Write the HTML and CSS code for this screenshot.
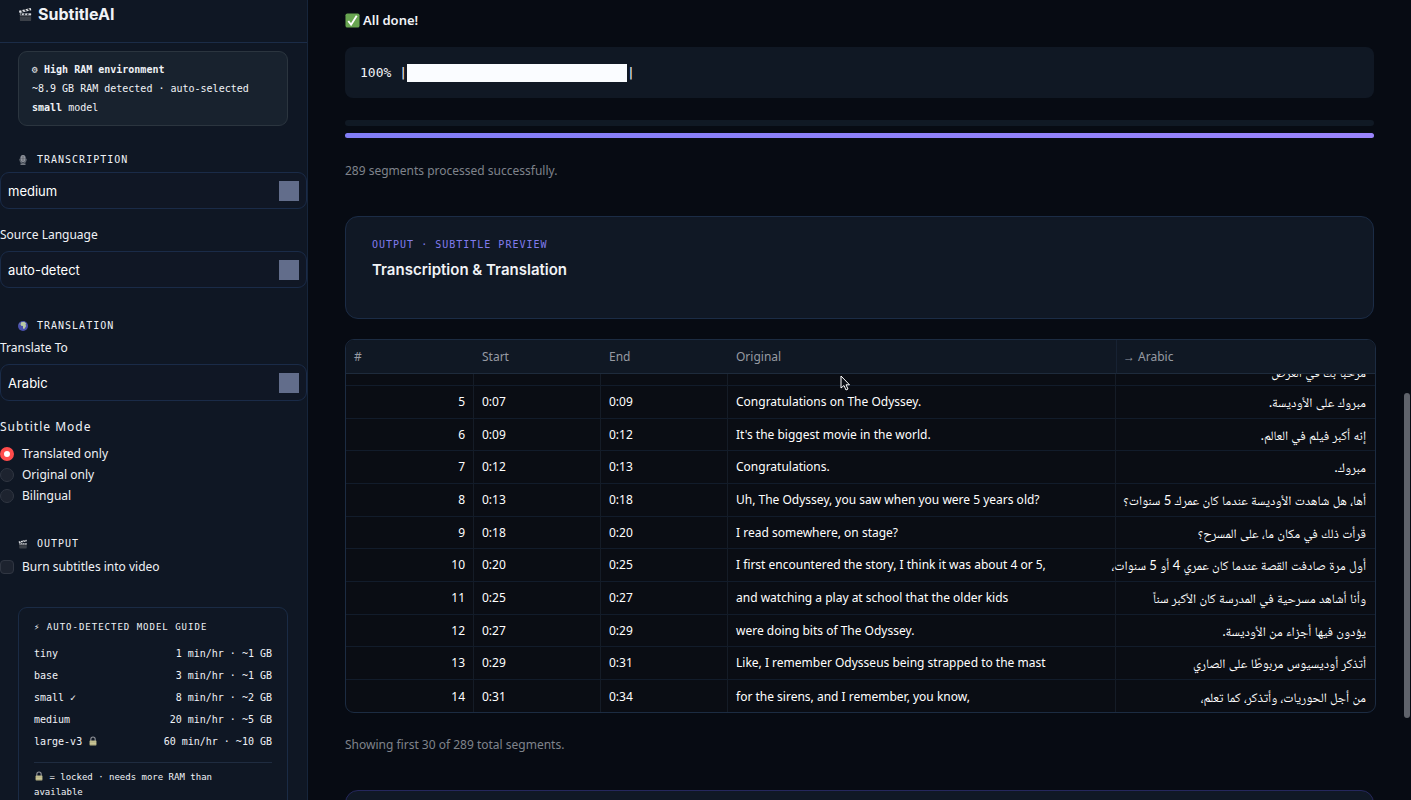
FILE: index.html
```html
<!DOCTYPE html>
<html lang="en">
<head>
  <meta charset="UTF-8" />
  <meta name="viewport" content="width=device-width, initial-scale=1.0"/>
  <title>SubtitleAI</title>
  <link rel="stylesheet" href="styles.css">
</head>
<body>

  <!-- shared icons -->
  <svg class="defs" width="0" height="0" aria-hidden="true">
    <symbol id="clapper" viewBox="0 0 16 16">
      <rect x="2" y="7" width="12" height="8" rx="1" fill="#3b4048"/>
      <path d="M2 10h12" stroke="#2a2e35"/>
      <path d="M1 4L13.500 1l.7 2.500L1.700 6.500z" fill="#e4e6ea"/>
      <path d="M3.500 3.400l2 2.200M7 2.500l2 2.200M10.500 1.700l2 2.200" stroke="#30343b" stroke-width="1.500"/>
      <path d="M2 6.800h12v2H2z" fill="#d5d8dd"/>
      <path d="M4 6.800l-1 2M7.500 6.800l-1 2M11 6.800l-1 2" stroke="#30343b" stroke-width="1.400"/>
    </symbol>
    <symbol id="mic" viewBox="0 0 16 16">
      <rect x="4" y="0" width="8" height="11" rx="4" fill="#a4a8b0"/>
      <path d="M5 3h6M5 5.500h6M5 8h6M8 .5v10" stroke="#555962"/>
      <path d="M3 6v2a5 5 0 0 0 10 0V6M8 12.500V14" fill="none" stroke="#7d828b" stroke-width="1.300"/>
      <path d="M4 13.500h8V16H4z" fill="#747982"/>
    </symbol>
    <symbol id="globe" viewBox="0 0 16 16">
      <circle cx="8" cy="8" r="8" fill="#4a50ad"/>
      <path d="M5 2l5-.7 3 2.500-1 2 1 2-3 5-2-1V8L5 7.500 4 5z" fill="#b9c9a5"/>
      <path d="M2 5l1-1.500L4 6z" fill="#8fae8b"/>
    </symbol>
    <symbol id="lock" viewBox="0 0 16 16">
      <path d="M4.500 8V5a3.500 3.500 0 0 1 7 0v3" fill="none" stroke="#8d9096" stroke-width="1.800"/>
      <rect x="2.500" y="7" width="11" height="8" rx="1" fill="#b5b184"/>
      <path d="M3 9.500h10M3 12h10" stroke="#d5d0a2"/>
    </symbol>
    <symbol id="check" viewBox="0 0 16 16">
      <rect x=".5" y=".5" width="15" height="15" rx="2" fill="#68a551"/>
      <path d="M3.500 8.500l3 4 6-9.500" fill="none" stroke="#fff" stroke-width="2"/>
    </symbol>
  </svg>

  <div class="app">
    <aside class="sidebar">
      <header class="brand">
        <svg class="icon-lg"><use href="#clapper"/></svg>
        <h1>SubtitleAI</h1>
      </header>

      <div class="ram-card">
        <b>⚙ High RAM environment</b><br>
        ~8.9 GB RAM detected · auto-selected<br>
        <b>small</b> model
      </div>

      <h2 class="section-label"><svg class="icon"><use href="#mic"/></svg>TRANSCRIPTION</h2>
      <div class="field">
        <select aria-label="Whisper model">
          <option>medium</option>
        </select>
      </div>
      <div class="field">
        <label for="source">Source Language</label>
        <select id="source">
          <option>auto-detect</option>
        </select>
      </div>

      <h2 class="section-label"><svg class="icon"><use href="#globe"/></svg>TRANSLATION</h2>
      <div class="field">
        <label for="target">Translate To</label>
        <select id="target">
          <option>Arabic</option>
        </select>
      </div>
      <fieldset class="field">
        <legend>Subtitle Mode</legend>
        <label class="choice"><input type="radio" name="mode" checked>Translated only</label>
        <label class="choice"><input type="radio" name="mode">Original only</label>
        <label class="choice"><input type="radio" name="mode">Bilingual</label>
      </fieldset>

      <h2 class="section-label"><svg class="icon"><use href="#clapper"/></svg>OUTPUT</h2>
      <div class="field">
        <label class="choice"><input type="checkbox">Burn subtitles into video</label>
      </div>

      <div class="guide">
        <h3>⚡ AUTO-DETECTED MODEL GUIDE</h3>
        <div class="guide-row"><span>tiny</span><span>1 min/hr · ~1 GB</span></div>
        <div class="guide-row"><span>base</span><span>3 min/hr · ~1 GB</span></div>
        <div class="guide-row"><span>small ✓</span><span>8 min/hr · ~2 GB</span></div>
        <div class="guide-row"><span>medium</span><span>20 min/hr · ~5 GB</span></div>
        <div class="guide-row"><span>large-v3 <svg class="icon"><use href="#lock"/></svg></span><span>60 min/hr · ~10 GB</span></div>
        <p class="guide-note"><svg class="icon"><use href="#lock"/></svg> = locked · needs more RAM than available</p>
      </div>
    </aside>

    <main class="content">
      <p class="status"><svg class="icon-lg"><use href="#check"/></svg>All done!</p>
      <div class="log">100% |<span class="log-bar"></span>|</div>
      <div class="track"></div>
      <progress value="100" max="100" aria-label="Progress"></progress>
      <p class="caption">289 segments processed successfully.</p>

      <section class="card">
        <div class="card-label">OUTPUT · SUBTITLE PREVIEW</div>
        <h2>Transcription &amp; Translation</h2>
      </section>

      <div class="table-wrap">
        <table>
          <colgroup>
            <col class="col-num"><col class="col-time"><col class="col-time"><col class="col-text"><col>
          </colgroup>
          <thead>
            <tr><th>#</th><th>Start</th><th>End</th><th>Original</th><th>→ Arabic</th></tr>
          </thead>
          <tbody>
            <tr class="peek"><td></td><td></td><td></td><td></td><td dir="rtl" lang="ar"><div>مرحبًا بك في العرض</div></td></tr>
            <tr><td>5</td><td>0:07</td><td>0:09</td><td>Congratulations on The Odyssey.</td><td dir="rtl" lang="ar">مبروك على الأوديسة.</td></tr>
            <tr><td>6</td><td>0:09</td><td>0:12</td><td>It's the biggest movie in the world.</td><td dir="rtl" lang="ar">إنه أكبر فيلم في العالم.</td></tr>
            <tr><td>7</td><td>0:12</td><td>0:13</td><td>Congratulations.</td><td dir="rtl" lang="ar">مبروك.</td></tr>
            <tr><td>8</td><td>0:13</td><td>0:18</td><td>Uh, The Odyssey, you saw when you were 5 years old?</td><td dir="rtl" lang="ar">أها، هل شاهدت الأوديسة عندما كان عمرك 5 سنوات؟</td></tr>
            <tr><td>9</td><td>0:18</td><td>0:20</td><td>I read somewhere, on stage?</td><td dir="rtl" lang="ar">قرأت ذلك في مكان ما، على المسرح؟</td></tr>
            <tr><td>10</td><td>0:20</td><td>0:25</td><td>I first encountered the story, I think it was about 4 or 5,</td><td dir="rtl" lang="ar">أول مرة صادفت القصة عندما كان عمري 4 أو 5 سنوات،</td></tr>
            <tr><td>11</td><td>0:25</td><td>0:27</td><td>and watching a play at school that the older kids</td><td dir="rtl" lang="ar">وأنا أشاهد مسرحية في المدرسة كان الأكبر سناً</td></tr>
            <tr><td>12</td><td>0:27</td><td>0:29</td><td>were doing bits of The Odyssey.</td><td dir="rtl" lang="ar">يؤدون فيها أجزاء من الأوديسة.</td></tr>
            <tr><td>13</td><td>0:29</td><td>0:31</td><td>Like, I remember Odysseus being strapped to the mast</td><td dir="rtl" lang="ar">أتذكر أوديسيوس مربوطًا على الصاري</td></tr>
            <tr><td>14</td><td>0:31</td><td>0:34</td><td>for the sirens, and I remember, you know,</td><td dir="rtl" lang="ar">من أجل الحوريات، وأتذكر، كما تعلم،</td></tr>
          </tbody>
        </table>
      </div>
      <p class="caption">Showing first 30 of 289 total segments.</p>

      <section class="card card-next"></section>
    </main>
  </div>

  <div class="scroll-thumb"></div>
  <svg class="cursor" viewBox="0 0 10 16"><path d="M1 1v12l3-2.500 2 4.500 2-1-2-4.200h3.500z" fill="#0a0d14" stroke="#fff"/></svg>

</body>
</html>
```
FILE: styles.css
```css
* {
  box-sizing: border-box;
}

body {
  margin: 0;
  background: #070b13;
  color: #f0f2f6;
  font-family: "Noto Sans", sans-serif;
  font-size: 12px;
  line-height: 20px;
}

h1, h2, h3, p {
  margin: 0;
}

svg {
  flex: none;
}

.defs {
  position: absolute;
}

.icon {
  width: 10px;
  height: 10px;
}

.icon-lg {
  width: 15px;
  height: 15px;
}

.app {
  display: flex;
  height: 100vh;
  overflow: hidden;
}

/* SIDEBAR */
.sidebar {
  flex: none;
  width: 308px;
  height: 100%;
  overflow: hidden;
  background: #0f1724;
  border-right: 1px solid #16253b;
}

.brand {
  display: flex;
  align-items: center;
  gap: 5px;
  height: 43px;
  padding: 0 18px 14px;
  border-bottom: 1px solid #1b2c47;
}

.brand h1 {
  font: 700 16px/20px Inter, sans-serif;
}

.ram-card {
  margin: 8px 19px 12px 18px;
  padding: 8px 13px;
  background: #18222e;
  border: 1px solid #2b353f;
  border-radius: 9px;
  font: 10px/19px "DejaVu Sans Mono", monospace;
}

.section-label {
  display: flex;
  align-items: center;
  gap: 9px;
  margin: 0 18px 4px;
  padding-top: 14px;
  font: 10px/16px "DejaVu Sans Mono", monospace;
  letter-spacing: 1px;
}

.field {
  margin: 0 0 16px;
  padding: 0;
  border: 0;
}

.field label, legend {
  display: block;
  padding: 0;
  margin-bottom: 6px;
}

legend {
  letter-spacing: 1px;
}

select {
  display: block;
  width: 100%;
  height: 37px;
  padding: 0 36px 0 7px;
  appearance: none;
  background: linear-gradient(#626d8b, #626d8b) no-repeat right 7px center / 20px 20px #101725;
  border: 1px solid #1a2b48;
  border-radius: 9px;
  color: #fff;
  font: 13px Inter, sans-serif;
}

.field .choice {
  display: flex;
  align-items: center;
  gap: 8px;
  height: 21px;
  margin: 0;
}

.choice input {
  appearance: none;
  width: 14px;
  height: 14px;
  margin: 0;
  background: #1d232f;
  border: 1px solid #303642;
  border-radius: 4px;
}

.choice input[type="radio"] {
  border-radius: 50%;
}

.choice input[type="radio"]:checked {
  background: #fff;
  border: 4px solid #ff4b4b;
}

.guide {
  margin: 30px 19px 0 18px;
  padding: 11px 15px 16px;
  border: 1px solid #1a2b45;
  border-radius: 9px;
  font: 10px/22px "DejaVu Sans Mono", monospace;
}

.guide h3 {
  margin-bottom: 8px;
  font-size: 9px;
  font-weight: 400;
  line-height: 16px;
  letter-spacing: 1px;
}

.guide-row {
  display: flex;
  justify-content: space-between;
}

.guide .icon {
  vertical-align: -1px;
}

.guide-note {
  margin-top: 9px;
  padding: 7px 16px 0 0;
  border-top: 1px solid #1f2c40;
  font-size: 9px;
  line-height: 15px;
}

/* MAIN */
.content {
  flex: 1;
  min-width: 0;
  padding: 10px 37px 0;
}

.status {
  display: flex;
  align-items: center;
  gap: 3px;
  margin-bottom: 17px;
  font-size: 13px;
  font-weight: 600;
}

.log {
  display: flex;
  align-items: center;
  height: 51px;
  padding: 0 15px;
  background: #101824;
  border-radius: 8px;
  font: 13px "DejaVu Sans Mono", monospace;
  white-space: pre;
}

.log-bar {
  width: 220px;
  height: 18px;
  background: #fafcff;
}

.track {
  height: 6px;
  margin: 22px 0 7px;
  background: #101924;
  border-radius: 3px;
}

progress {
  display: block;
  appearance: none;
  width: 100%;
  height: 5px;
  border: 0;
}

progress::-webkit-progress-bar {
  background: #101924;
  border-radius: 3px;
}

progress::-webkit-progress-value {
  background: linear-gradient(90deg, #817df6, #9a84fc);
  border-radius: 3px;
}

.caption {
  margin: 23px 0 35px;
  color: #7f838b;
}

.card {
  height: 103px;
  padding: 20px 26px;
  background: #101825;
  border: 1px solid #1b2c46;
  border-radius: 13px;
}

.card-label {
  color: #817ced;
  font: 10px/16px "DejaVu Sans Mono", monospace;
  letter-spacing: 1px;
}

.card h2 {
  margin-top: 7px;
  font: 600 15px/20px Inter, sans-serif;
}

.card-next {
  border-color: #25275d;
}

.table-wrap {
  height: 374px;
  margin-top: 20px;
  margin-right: -2px;
  overflow: hidden;
  background: #0a0d14;
  border: 1px solid #1c2c42;
  border-radius: 9px;
}

.table-wrap + .caption {
  margin-top: 22px;
}

table {
  width: 100%;
  table-layout: fixed;
  border-collapse: separate;
  border-spacing: 0;
}

.col-num {
  width: 128px;
}

.col-time {
  width: 127px;
}

.col-text {
  width: 388px;
}

th {
  height: 34px;
  padding: 0 8px;
  background: #101824;
  border-bottom: 1px solid #1e2b3c;
  color: #969aa2;
  font-weight: 400;
  text-align: left;
}

th:last-child {
  padding-left: 6px;
  border-left: 1px solid #172233;
}

td {
  height: 33px;
  padding: 0 8px;
  border-right: 1px solid #151c27;
  border-bottom: 1px solid #121c2b;
  color: #fff;
  white-space: nowrap;
}

/* keeps the ten rows inside the frame */
tbody tr:nth-child(3n) td {
  height: 32px;
}

td:first-child {
  text-align: right;
}

td:last-child {
  padding: 0 9px 0 2px;
  border-right: 0;
  font-family: Lato, "Noto Naskh Arabic", sans-serif;
  font-size: 13px;
}

tbody tr:last-child td {
  border-bottom: 0;
}

tbody .peek td {
  height: 12px;
  vertical-align: top;
}

.peek div {
  display: flex;
  align-items: flex-end;
  height: 8px;
  overflow: hidden;
}

/* OVERLAYS */
.scroll-thumb {
  position: absolute;
  top: 393px;
  right: 1px;
  width: 6px;
  height: 325px;
  background: #5f636b;
  border-radius: 3px;
}

.cursor {
  position: absolute;
  top: 375px;
  left: 840px;
  width: 10px;
  height: 16px;
}
```
